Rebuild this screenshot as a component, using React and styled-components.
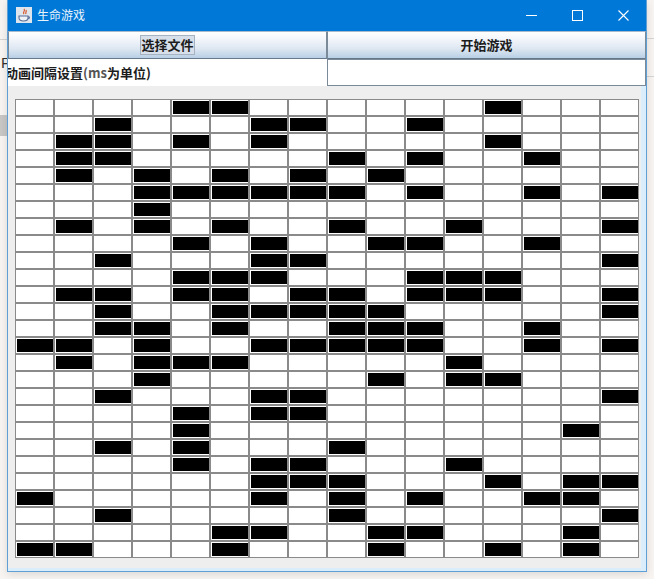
import React from "react";
import styled, { createGlobalStyle } from "styled-components";

const Global = createGlobalStyle`
  html, body { margin: 0; padding: 0; width: 654px; height: 579px; overflow: hidden; background: #f7f4f1; }
  #root { width: 654px; height: 579px; }
`;

const Desktop = styled.div`
  position: relative;
  width: 654px;
  height: 579px;
  background: #f7f4f1;
  overflow: hidden;
  font-family: "Noto Sans CJK SC", "Liberation Sans", sans-serif;
`;

const BackdropGlyph = styled.span`
  position: absolute;
  left: 1px;
  top: 54px;
  font: 15px "Liberation Sans", sans-serif;
  color: #333;
`;

const BackdropBand = styled.div`
  position: absolute;
  left: 0;
  top: 115px;
  width: 8px;
  height: 21px;
  background: #c9c7c5;
`;

const BackdropRule = styled.div`
  position: absolute;
  top: ${(p) => p.$y}px;
  left: ${(p) => (p.$right ? "646px" : "0")};
  width: 8px;
  height: 1px;
  background: #d4d4d4;
`;

const Window = styled.div`
  position: absolute;
  left: 7px;
  top: 0;
  width: 640px;
  height: 572px;
  box-sizing: border-box;
  border: 1px solid #5f9fd6;
  border-top: 0;
  background: #d9edfa;
  box-shadow: 0 2px 8px rgba(0, 0, 0, 0.12);
  display: flex;
  flex-direction: column;
`;

const TitleBar = styled.div`
  height: 31px;
  flex: none;
  background: #0078d7;
  display: flex;
  align-items: center;
  color: #fff;
  padding: 0 0 1px 8px;
  box-sizing: border-box;
`;

const AppIcon = styled.svg`
  width: 16px;
  height: 16px;
  flex: none;
`;

const TitleText = styled.span`
  margin: 0 0 2px 5px;
  font-size: 12px;
  flex: 1;
  color: #e8f3fc;
`;

const WinButton = styled.div`
  width: 46px;
  height: 30px;
  display: flex;
  align-items: center;
  justify-content: center;
`;

const Row = styled.div`
  display: grid;
  grid-template-columns: 319px 319px;
  flex: none;
`;

const ToolButton = styled.button`
  height: 28px;
  padding: 0 0 1px;
  box-sizing: border-box;
  border: 1px solid #7a8a99;
  border-top-color: #a9bace;
  border-bottom-color: #66788a;
  background: linear-gradient(180deg, #ffffff 0%, #f4f7fb 25%, #dde7f2 65%, #b8cfe5 100%);
  font: 700 13px "Noto Sans CJK SC", sans-serif;
  color: #1c1c1c;
  display: flex;
  align-items: center;
  justify-content: center;
`;

const FocusLabel = styled.span`
  display: block;
  line-height: 18px;
  padding: 0 0.5px;
  background: ${(p) => (p.$focused ? "#d7e0ea" : "transparent")};
  outline: ${(p) => (p.$focused ? "1px solid #a4b2c2" : "none")};
`;

const Label = styled.div`
  height: 27px;
  background: #fff;
  overflow: hidden;
  white-space: nowrap;
  font: 700 13px/27px "Noto Sans CJK SC", sans-serif;
  color: #1c1c1c;
  text-indent: -3px;
`;

const Latin = styled.span`
  color: #555;
`;

const Field = styled.input`
  height: 27px;
  box-sizing: border-box;
  border: 1px solid #7a8a99;
  background: #fff;
  padding: 0;
  outline: none;
`;

const Board = styled.div`
  flex: 1;
  margin: 0 5px 3px 0;
  padding: 13px 0 0 7px;
  background: #eeeeee;
  display: grid;
  grid-template-columns: repeat(16, 39px);
  grid-auto-rows: 17px;
  align-content: start;
`;

const Cell = styled.div`
  box-sizing: border-box;
  border: 1px solid #8a8a8a;
  padding: 1px 0 1px 1px;
  background: #fff;
`;

const Fill = styled.div`
  width: 100%;
  height: 100%;
  background: #000;
`;

const alive = [
  [4, 5, 12],
  [2, 6, 7, 10],
  [1, 2, 4, 6, 12],
  [1, 2, 8, 10, 13],
  [1, 3, 5, 7, 9],
  [3, 4, 5, 6, 7, 8, 10, 13, 15],
  [3],
  [1, 3, 5, 8, 11, 15],
  [4, 6, 9, 10, 13],
  [2, 6, 7, 15],
  [4, 5, 6, 10, 11, 12],
  [1, 2, 4, 5, 7, 8, 10, 11, 12, 15],
  [2, 5, 6, 7, 8, 9, 15],
  [2, 3, 5, 8, 9, 10, 13],
  [0, 1, 3, 6, 7, 8, 9, 10, 13, 15],
  [1, 3, 4, 5, 11],
  [3, 9, 11, 12],
  [2, 6, 7, 15],
  [4, 6, 7],
  [4, 14],
  [2, 4, 8],
  [4, 6, 7, 11],
  [6, 7, 8, 12, 14, 15],
  [0, 6, 8, 10, 13, 14],
  [2, 8, 15],
  [5, 6, 9, 10, 14],
  [0, 1, 5, 9, 12, 14],
];

export default function App() {
  return (
    <Desktop>
      <Global />
      <BackdropRule $y={39} />
      <BackdropRule $y={38} $right />
      <BackdropRule $y={76} $right />
      <BackdropGlyph>P</BackdropGlyph>
      <BackdropBand />
      <Window>
        <TitleBar>
          <AppIcon viewBox="0 0 16 16">
            <rect width="16" height="16" fill="#dfe5ec" />
            <path d="M8 2c2 2-2 3 0 5M10 3c1 2-1 2 0 4" stroke="#d8562a" strokeWidth="1.2" fill="none" />
            <path d="M3 9h9v2c0 2-2 3-4.500 3S3 13 3 11zM12 9.500c2 0 2 2.500-.5 2.500" stroke="#5a6f9a" strokeWidth="1.100" fill="#eef2f6" />
          </AppIcon>
          <TitleText>生命游戏</TitleText>
          <WinButton>
            <svg width="11" height="11" viewBox="0 0 11 11"><path d="M0 5.500h11" stroke="#fff" /></svg>
          </WinButton>
          <WinButton>
            <svg width="11" height="11" viewBox="0 0 11 11"><rect x=".5" y=".5" width="10" height="10" fill="none" stroke="#fff" /></svg>
          </WinButton>
          <WinButton>
            <svg width="11" height="11" viewBox="0 0 11 11"><path d="M.5.500l10 10M10.500.500l-10 10" stroke="#fff" strokeWidth="1.100" /></svg>
          </WinButton>
        </TitleBar>
        <Row>
          <ToolButton><FocusLabel $focused>选择文件</FocusLabel></ToolButton>
          <ToolButton><FocusLabel>开始游戏</FocusLabel></ToolButton>
        </Row>
        <Row>
          <Label>动画间隔设置<Latin>(ms</Latin>为单位)</Label>
          <Field />
        </Row>
        <Board>
          {alive.flatMap((cols, r) =>
            Array.from({ length: 16 }, (_, c) => (
              <Cell key={`${r}-${c}`}>{cols.includes(c) && <Fill />}</Cell>
            ))
          )}
        </Board>
      </Window>
    </Desktop>
  );
}
